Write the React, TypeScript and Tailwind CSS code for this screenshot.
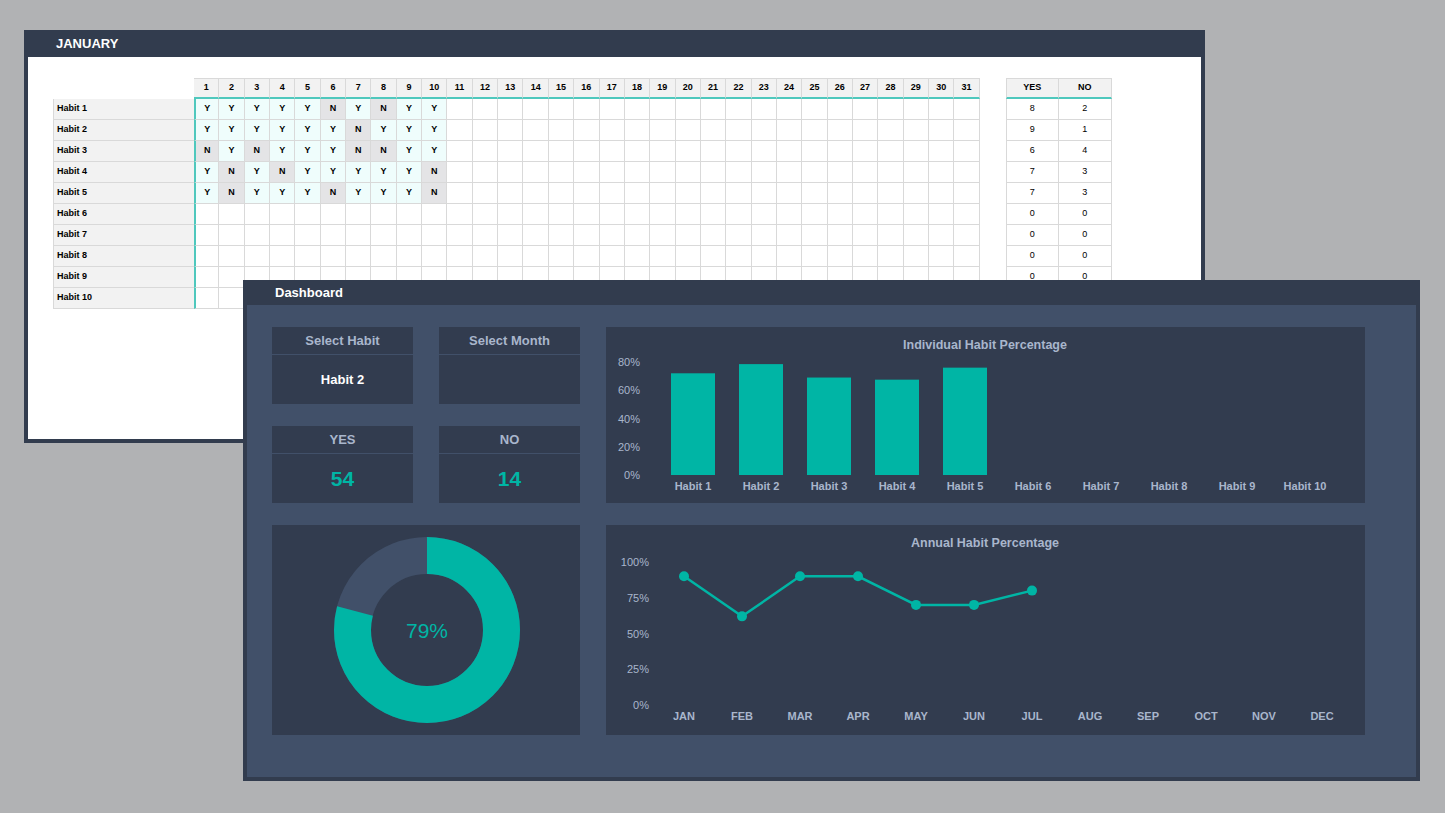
const data: string[] = ["YYYYYNYNYY", "YYYYYYNYYY", "NYNYYYNNYY", "YNYNYYYYYN", "YNYYYNYYYN"];
const yesNo = [[8, 2], [9, 1], [6, 4], [7, 3], [7, 3], [0, 0], [0, 0], [0, 0], [0, 0], [0, 0]];
const days = Array.from({ length: 31 }, (_, i) => i + 1);
const habits = Array.from({ length: 10 }, (_, i) => `Habit ${i + 1}`);
const bars = [72, 78.5, 69, 67.5, 76];
const months = ["JAN", "FEB", "MAR", "APR", "MAY", "JUN", "JUL", "AUG", "SEP", "OCT", "NOV", "DEC"];
const annual = [90, 62, 90, 90, 70, 70, 80];
const TEAL = "#00b5a5";

function Sheet() {
  return (
    <div className="absolute left-[24px] top-[30px] w-[1181px] h-[413px] bg-[#323c4e] flex flex-col">
      <div className="h-[27px] flex items-center pl-[32px] text-white font-bold text-[13px]">JANUARY</div>
      <div className="flex-1 bg-white mx-[4px] mb-[4px] pt-[21px] pl-[25px] flex gap-[26px] text-[9px] font-bold text-black">
        <div className="flex flex-col">
          <div className="flex h-[21px]">
            <div className="w-[141px]" />
            {days.map((d) => (
              <div key={d} className="w-[25.35px] bg-[#f2f2f2] border-r border-t border-[#d9d9d9] border-b-2 border-b-[#4fc8bd] flex items-center justify-center first:border-l">{d}</div>
            ))}
          </div>
          {habits.map((h, r) => (
            <div key={h} className="flex h-[21px]">
              <div className="w-[141px] bg-[#f2f2f2] border-l border-b border-[#d9d9d9] flex items-center pl-[3px]">{h}</div>
              {days.map((d, c) => {
                const v = data[r]?.[c];
                const bg = v === "Y" ? "bg-[#effdfc]" : v === "N" ? "bg-[#e4e4e6]" : "bg-white";
                return (
                  <div key={d} className={`w-[25.35px] border-r border-b border-[#d9d9d9] flex items-center justify-center ${bg} ${c === 0 ? "border-l-2 border-l-[#4fc8bd]" : ""}`}>{v}</div>
                );
              })}
            </div>
          ))}
        </div>
        <div className="flex flex-col">
          <div className="flex h-[21px]">
            {["YES", "NO"].map((t) => (
              <div key={t} className="w-[53px] bg-[#f2f2f2] border-r border-t border-[#d9d9d9] border-b-2 border-b-[#4fc8bd] flex items-center justify-center first:border-l">{t}</div>
            ))}
          </div>
          {yesNo.map((p, r) => (
            <div key={r} className="flex h-[21px] font-normal">
              {p.map((n, i) => (
                <div key={i} className="w-[53px] border-r border-b border-[#d9d9d9] flex items-center justify-center first:border-l">{n}</div>
              ))}
            </div>
          ))}
        </div>
      </div>
    </div>
  );
}

function Card({ title, children }: { title: string; children: React.ReactNode }) {
  return (
    <div className="w-[141px] h-[77px] bg-[#323c4f] flex flex-col">
      <div className="h-[28px] border-b border-[#415069] flex items-center justify-center text-[#a9b6cc] font-bold text-[13px]">{title}</div>
      <div className="flex-1 flex items-center justify-center">{children}</div>
    </div>
  );
}

function BarChart() {
  const y0 = 148, k = 113 / 80;
  return (
    <svg width="759" height="176" className="block">
      <text x="379" y="22" textAnchor="middle" fill="#a9b6cc" fontSize="12.5" fontWeight="bold">Individual Habit Percentage</text>
      {[0, 20, 40, 60, 80].map((p) => (
        <text key={p} x="34" y={y0 - p * k + 4} textAnchor="end" fill="#a9b6cc" fontSize="11">{p}%</text>
      ))}
      {habits.map((h, i) => {
        const cx = 87 + i * 68;
        const v = bars[i];
        return (
          <g key={h}>
            {v && <rect x={cx - 22} y={y0 - v * k} width="44" height={v * k} fill={TEAL} />}
            <text x={cx} y="163" textAnchor="middle" fill="#a9b6cc" fontSize="11" fontWeight="bold">{h}</text>
          </g>
        );
      })}
    </svg>
  );
}

function LineChart() {
  const y0 = 180, k = 143 / 100;
  const pts = annual.map((v, i) => [78 + i * 58, y0 - v * k]);
  return (
    <svg width="759" height="210" className="block">
      <text x="379" y="22" textAnchor="middle" fill="#a9b6cc" fontSize="12.5" fontWeight="bold">Annual Habit Percentage</text>
      {[0, 25, 50, 75, 100].map((p) => (
        <text key={p} x="43" y={y0 - p * k + 4} textAnchor="end" fill="#a9b6cc" fontSize="11">{p}%</text>
      ))}
      <polyline points={pts.map((p) => p.join(",")).join(" ")} fill="none" stroke={TEAL} strokeWidth="2.5" />
      {pts.map((p, i) => <circle key={i} cx={p[0]} cy={p[1]} r="5" fill={TEAL} />)}
      {months.map((m, i) => (
        <text key={m} x={78 + i * 58} y="195" textAnchor="middle" fill="#a9b6cc" fontSize="11" fontWeight="bold">{m}</text>
      ))}
    </svg>
  );
}

function Donut() {
  const r = 74.5, c = 2 * Math.PI * r;
  return (
    <svg width="308" height="210" className="block">
      <circle cx="155" cy="105" r={r} fill="none" stroke="#415069" strokeWidth="37" />
      <circle cx="155" cy="105" r={r} fill="none" stroke={TEAL} strokeWidth="37"
        strokeDasharray={`${c * 0.79} ${c}`} transform="rotate(-90 155 105)" />
      <text x="155" y="113" textAnchor="middle" fill={TEAL} fontSize="21">79%</text>
    </svg>
  );
}

function Dashboard() {
  return (
    <div className="absolute left-[243px] top-[280px] w-[1177px] h-[501px] bg-[#323c4e] flex flex-col">
      <div className="h-[25px] flex items-center pl-[32px] text-white font-bold text-[13px]">Dashboard</div>
      <div className="flex-1 bg-[#415069] mx-[4px] mb-[4px] pt-[22px] pl-[25px] flex flex-col gap-[22px]">
        <div className="flex gap-[26px]">
          <div className="flex flex-col gap-[22px]">
            <div className="flex gap-[26px]">
              <Card title="Select Habit"><span className="text-white font-bold text-[13px]">Habit 2</span></Card>
              <Card title="Select Month"><span /></Card>
            </div>
            <div className="flex gap-[26px]">
              <Card title="YES"><span className="text-[#00b5a5] font-bold text-[21px]">54</span></Card>
              <Card title="NO"><span className="text-[#00b5a5] font-bold text-[21px]">14</span></Card>
            </div>
          </div>
          <div className="w-[759px] h-[176px] bg-[#323c4f]"><BarChart /></div>
        </div>
        <div className="flex gap-[26px]">
          <div className="w-[308px] h-[210px] bg-[#323c4f]"><Donut /></div>
          <div className="w-[759px] h-[210px] bg-[#323c4f]"><LineChart /></div>
        </div>
      </div>
    </div>
  );
}

export default function App() {
  return (
    <div className="relative w-[1445px] h-[813px] bg-[#b1b2b4] overflow-hidden" style={{ fontFamily: '"Liberation Sans", Arial, sans-serif' }}>
      <Sheet />
      <Dashboard />
    </div>
  );
}
